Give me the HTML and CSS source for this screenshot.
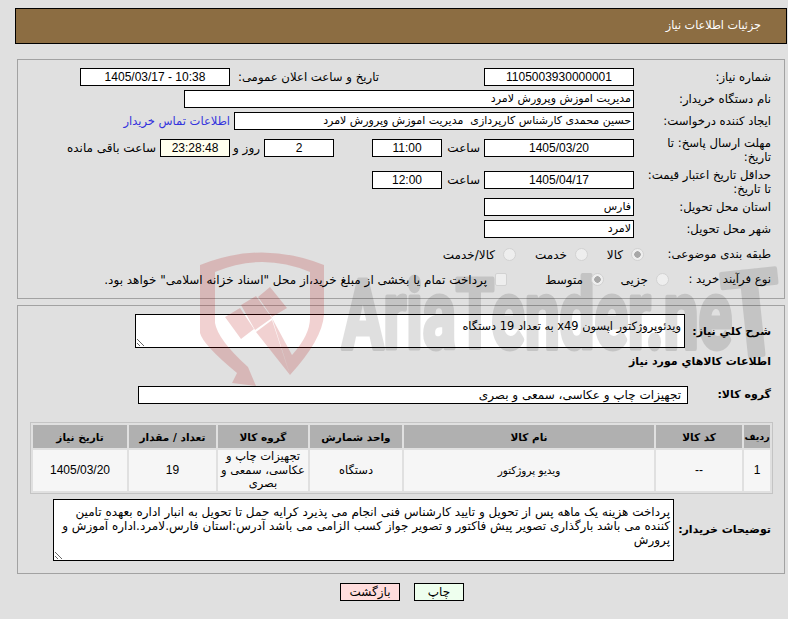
FILE: index.html
```html
<!DOCTYPE html>
<html lang="fa" dir="rtl">
<head>
<meta charset="utf-8">
<title>جزئیات اطلاعات نیاز</title>
<link rel="stylesheet" href="styles.css">
</head>
<body>
<svg class="watermark" width="788" height="619" viewBox="0 0 788 619" aria-hidden="true">
  <path class="wm-shield" fill-rule="evenodd" d="M200 265 Q262 240 324 265 L324 315 Q322 340 290 375 L272 318 L292 355 Q310 335 310 318 L310 272 Q262 252 215 272 L215 323 Q218 340 248 367 L256 386 L232 383 L237 373 Q203 345 200 333 Z"/>
  <path class="wm-shield" d="M225 317 L240 308 L254 329 L241 339 Z M241 305 L256 296 L272 318 L255 330 Z M258 297 L270 287 L287 308 L272 317 Z M256 332 L272 320 L290 375 Z"/>
  <g class="wm-text">
    <text x="342" y="348" textLength="390" lengthAdjust="spacingAndGlyphs">AriaTender.ne</text>
    <text class="wm-last" x="728" y="358" textLength="58" lengthAdjust="spacingAndGlyphs" transform="rotate(-6 728 358)">T</text>
  </g>
</svg>
<header class="title-bar"><span>جزئیات اطلاعات نیاز</span></header>

<section class="panel panel-top">
  <div class="row">
    <div class="label">شماره نیاز:</div>
    <div class="box w150 center num">1105003930000001</div>
    <div class="label-inline">تاریخ و ساعت اعلان عمومی:</div>
    <div class="box w150 center num ltr">1405/03/17 - 10:38</div>
  </div>
  <div class="row">
    <div class="label">نام دستگاه خریدار:</div>
    <div class="box w450 small">مدیریت اموزش وپرورش لامرد</div>
  </div>
  <div class="row">
    <div class="label">ایجاد کننده درخواست:</div>
    <div class="box w400 small">حسین محمدی کارشناس کارپردازی &nbsp;مدیریت اموزش وپرورش لامرد</div>
    <a class="contact" href="#">اطلاعات تماس خریدار</a>
  </div>
  <div class="row row-tall">
    <div class="label label-wrap">مهلت ارسال پاسخ: تا تاریخ:</div>
    <div class="box w150 center num">1405/03/20</div>
    <div class="unit unit-hour">ساعت</div>
    <div class="box w70 center num">11:00</div>
    <div class="box w70 center num gap-days">2</div>
    <div class="unit unit-day">روز و</div>
    <div class="box w70 center num ivory">23:28:48</div>
    <div class="unit unit-left">ساعت باقی مانده</div>
  </div>
  <div class="row row-tall2">
    <div class="label label-wrap">حداقل تاریخ اعتبار قیمت: تا تاریخ:</div>
    <div class="box w150 center num">1405/04/17</div>
    <div class="unit unit-hour">ساعت</div>
    <div class="box w70 center num">12:00</div>
  </div>
  <div class="row">
    <div class="label">استان محل تحویل:</div>
    <div class="box w150 small">فارس</div>
  </div>
  <div class="row">
    <div class="label">شهر محل تحویل:</div>
    <div class="box w150 small">لامرد</div>
  </div>
  <div class="row row-radio">
    <div class="label">طبقه بندی موضوعی:</div>
    <label class="opt opt-a"><input type="radio" name="cat" checked disabled><span>کالا</span></label>
    <label class="opt opt-b"><input type="radio" name="cat" disabled><span>خدمت</span></label>
    <label class="opt opt-c"><input type="radio" name="cat" disabled><span>کالا/خدمت</span></label>
  </div>
  <div class="row row-radio2">
    <div class="label label-narrow">نوع فرآیند خرید :</div>
    <label class="opt opt-d"><input type="radio" name="proc" disabled><span>جزیی</span></label>
    <label class="opt opt-e"><input type="radio" name="proc" checked disabled><span>متوسط</span></label>
    <label class="opt opt-f"><input type="checkbox" disabled><span>پرداخت تمام یا بخشی از مبلغ خرید،از محل "اسناد خزانه اسلامی" خواهد بود.</span></label>
  </div>
</section>

<section class="panel panel-bottom">
  <div class="row-desc">
    <div class="label-b lb-desc">شرح کلي نیاز:</div>
    <textarea class="area area-desc" readonly>ویدئوپروژکتور اپسون x49 به تعداد 19 دستگاه</textarea>
  </div>
  <div class="heading">اطلاعات کالاهاي مورد نیاز</div>
  <div class="row-group">
    <div class="label-b lb-group">گروه کالا:</div>
    <div class="box w550 boxpad">تجهیزات چاپ و عکاسی، سمعی و بصری</div>
  </div>
  <table class="goods">
    <thead>
      <tr>
        <th class="c1">ردیف</th><th class="c2">کد کالا</th><th class="c3">نام کالا</th><th class="c4">واحد شمارش</th><th class="c5">گروه کالا</th><th class="c6">تعداد / مقدار</th><th class="c7">تاریخ نیاز</th>
      </tr>
    </thead>
    <tbody>
      <tr>
        <td class="num">1</td><td class="num">--</td><td class="tight">ویدیو پروژکتور</td><td>دستگاه</td><td>تجهیزات چاپ و عکاسی، سمعی و بصری</td><td class="num">19</td><td class="num">1405/03/20</td>
      </tr>
    </tbody>
  </table>
  <div class="row-notes">
    <div class="label-b lb-notes">توضیحات خریدار:</div>
    <textarea class="area area-notes" readonly>پرداخت هزینه یک ماهه پس از تحویل و تایید کارشناس فنی انجام می پذیرد کرایه حمل تا تحویل به انبار اداره بعهده تامین کننده می باشد بارگذاری تصویر پیش فاکتور و تصویر جواز کسب الزامی می باشد آدرس:استان فارس.لامرد.اداره آموزش و پرورش</textarea>
  </div>
</section>

<div class="actions">
  <button class="btn btn-print" type="button">چاپ</button>
  <button class="btn btn-back" type="button">بازگشت</button>
</div>
</body>
</html>
```
FILE: styles.css
```css
* { box-sizing: border-box; }
html, body { margin: 0; padding: 0; }
body {
  width: 788px;
  height: 619px;
  overflow: hidden;
  position: relative;
  background: #e0e0e0;
  color: #000;
  font-family: "DejaVu Sans", sans-serif;
  font-size: 12px;
  line-height: 14px;
}
.watermark { position: absolute; left: 0; top: 0; z-index: 1; pointer-events: none; }
.wm-shield { fill: #b40000; opacity: 0.18; }
.wm-text { opacity: 0.12; }
.wm-text text {
  font-family: "Roboto", sans-serif;
  font-weight: 700;
  font-size: 96px;
  fill: #000;
  stroke: #000;
  stroke-width: 5px;
  stroke-linejoin: round;
  direction: ltr;
}
.wm-text .wm-last { font-size: 118px; }
.num { font-family: "Liberation Sans", sans-serif; font-size: 12px; }
.title-bar {
  height: 36px;
  margin: 8px 1px 0 15px;
  padding-right: 25px;
  border: 1px solid #000;
  background: #8c6d42;
  color: #fff;
  display: flex;
  align-items: center;
  font-size: 11.2px;
}
.panel {
  margin-left: 17px;
  margin-right: 3px;
  border: 1px solid #a2a2a2;
  padding-right: 13px;
}
.panel > * { position: relative; z-index: 2; }
.panel > .row-desc { position: static; }
.panel-top { height: 240px; margin-top: 15px; padding-top: 8px; }
.panel-bottom { height: 269px; margin-top: 6px; padding-top: 8px; }
.row { display: flex; align-items: center; height: 18px; margin-bottom: 4px; }
.row-tall { margin-top: 9px; margin-bottom: 14px; }
.row-tall2 { margin-bottom: 9px; }
.row-radio { margin-top: 7px; margin-bottom: 7px; }
.label { width: 137px; flex: none; padding-left: 4px; font-size: 11.7px; }
.label-wrap { align-self: flex-start; margin-top: -3px; }
.label-inline { margin-right: 105px; width: 149px; flex: none; white-space: nowrap; font-size: 11.7px; }
.box {
  height: 18px;
  border: 1px solid #000;
  background: #fff;
  flex: none;
  line-height: 16px;
  padding: 0 2px;
  white-space: nowrap;
  overflow: hidden;
}
.small { font-size: 11px; }
.center { text-align: center; }
.ltr { direction: ltr; }
.w150 { width: 150px; }
.w70 { width: 70px; }
.w400 { width: 400px; }
.w450 { width: 450px; }
.w550 { width: 550px; }
.gap-days { margin-right: 38px; }
.ivory { background: #ffffee; }
.unit { flex: none; }
.unit-hour { width: 42px; padding-right: 4px; }
.unit-day { width: 34px; padding-right: 4px; }
.unit-left { padding-right: 4px; }
.contact { color: #3333dd; text-decoration: none; margin-right: 4px; font-size: 11.5px; }
.opt { display: flex; align-items: center; flex: none; }
.opt span { padding-top: 2px; }
.opt input {
  appearance: none;
  width: 13px;
  height: 13px;
  margin: 0 0 0 8px;
  border: 1px solid #d2d2d2;
  border-radius: 50%;
  background: #eeeeee;
}
.opt input:checked { background: radial-gradient(circle, #a8a8a8 0 3px, #eeeeee 3.5px); }
.opt input[type="checkbox"] { border-radius: 2px; width: 12px; }
.opt-a { margin-right: -10px; width: 56px; }
.opt-b { width: 72px; }
.label-narrow { width: 102px; }
.opt-d { width: 65px; }
.opt-e { width: 97px; }
.row-desc { display: flex; height: 34px; }
.label-b { font-weight: 700; font-size: 11px; flex: none; white-space: nowrap; }
.lb-desc { width: 86px; padding-top: 11px; position: relative; z-index: 2; }
.area {
  display: block;
  border: 1px solid #000;
  border-radius: 0;
  background: #fff;
  font-family: "DejaVu Sans", sans-serif;
  font-size: 12px;
  line-height: 14px;
  margin: 0;
  padding: 4px 3px 4px 8px;
  overflow: hidden;
  outline: none;
}
.area-desc { width: 550px; height: 34px; position: relative; z-index: 0; font-size: 11.4px; }
.heading { font-weight: 700; font-size: 11px; margin-top: 7px; height: 14px; }
.row-group { display: flex; align-items: center; margin-top: 17px; height: 18px; }
.lb-group { width: 83px; }
.boxpad { padding-right: 6px; }
.goods {
  width: 741px;
  margin: 18px -2px 0 0;
  border: 1px solid #c4c4c4;
  border-collapse: separate;
  border-spacing: 2px;
  table-layout: fixed;
  background: #e0e0e0;
}
.goods th { background: #b0b0b0; height: 23px; padding: 0; font-weight: 700; font-size: 10.5px; text-align: center; white-space: nowrap; }
.goods th.c1 { font-size: 9.5px; }
.goods td { background: #f6f6f6; height: 41px; padding: 0; text-align: center; line-height: 13.5px; font-size: 11.5px; }
.goods td.num { font-size: 12px; }
.goods td.tight { font-size: 10.5px; }
.c1 { width: 26px; }
.c2 { width: 86px; }
.c3 { width: 250px; }
.c4 { width: 92px; }
.c5 { width: 90px; }
.c6 { width: 87px; }
.c7 { width: 94px; }
.row-notes { display: flex; margin-top: 5px; height: 62px; }
.lb-notes { width: 97px; padding-top: 24px; }
.area-notes { width: 621px; height: 62px; padding-top: 5px; }
.actions { display: flex; gap: 14px; margin: 9px 324px 0 0; }
.btn {
  height: 18px;
  border: 1px solid #000;
  border-radius: 0;
  padding: 0;
  font-family: "DejaVu Sans", sans-serif;
  font-size: 12px;
  color: #000;
}
.btn-print { width: 50px; background: #eeffee; }
.btn-back { width: 60px; background: #ffdddd; }
```
